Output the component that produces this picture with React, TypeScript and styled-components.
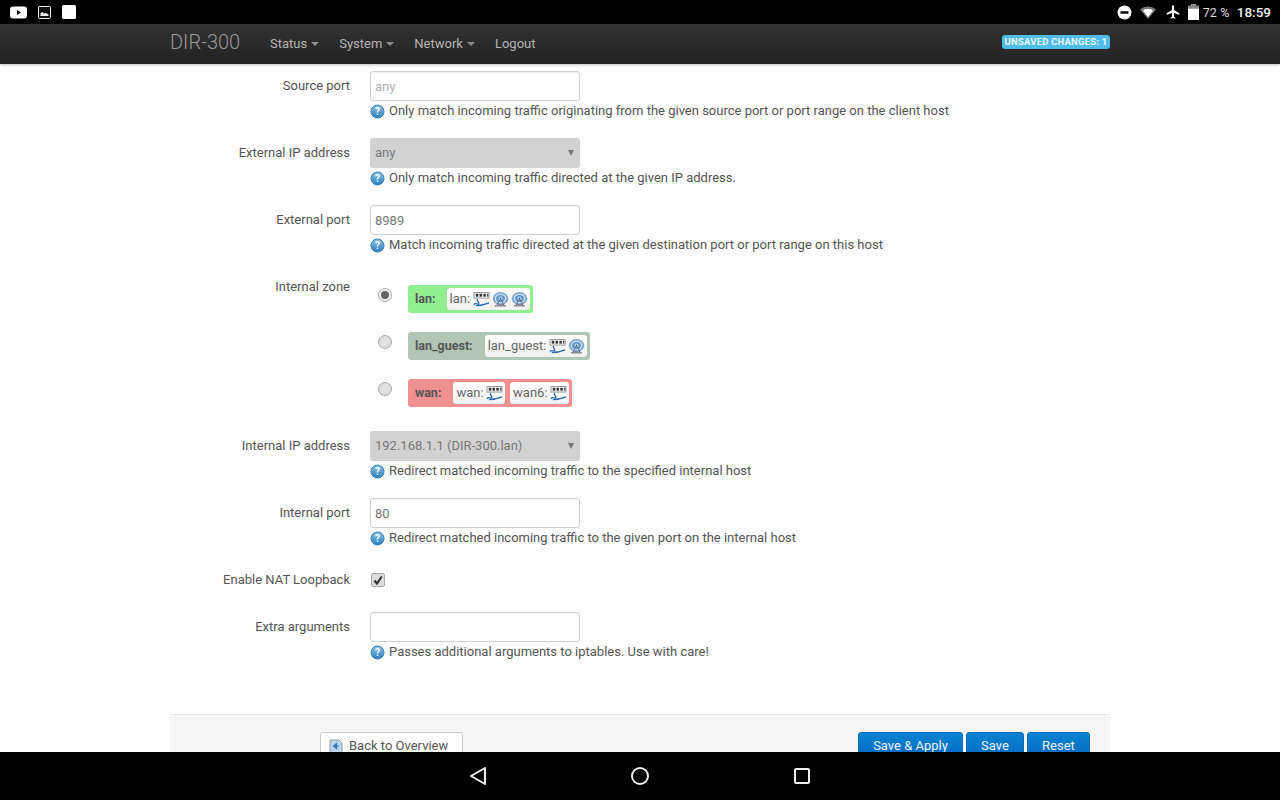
import React from "react";
import styled, { createGlobalStyle } from "styled-components";

const Global = createGlobalStyle`
  html, body { margin: 0; padding: 0; background: #000; }
  body { font-family: Roboto, "Liberation Sans", sans-serif; font-size: 13px; color: #555; overflow: hidden; }
  * { box-sizing: border-box; }
`;

const Screen = styled.div`
  width: 1280px; height: 800px; display: flex; flex-direction: column; overflow: hidden; background: #fff;
`;
const StatusBar = styled.div`
  height: 24px; flex: none; background: #000; display: flex; align-items: center; justify-content: space-between; padding: 0 9px 0 10px; color: #fff;
`;
const LeftIcons = styled.div`
  display: flex; align-items: center; gap: 11px;
`;
const RightIcons = styled.div`
  display: flex; align-items: center;
`;
const StatusSlot = styled.span`
  display: flex; margin-right: ${p => p.$after}px;
`;
const BatteryText = styled.span`
  font-size: 12.5px; color: #ddd; width: 34px; letter-spacing: .1px; white-space: nowrap;
`;
const Clock = styled.span`
  font-size: 13.5px; font-weight: 500; color: #f2f2f2;
`;
const NavBar = styled.header`
  height: 40px; flex: none; background: linear-gradient(#333333, #222222); box-shadow: 0 1px 3px rgba(0,0,0,.25); position: relative; z-index: 1;
`;
const NavInner = styled.div`
  width: 940px; height: 100%; margin: 0 auto; display: flex; align-items: center; padding-bottom: 2px;
`;
const Brand = styled.a`
  font-size: 20px; font-weight: 300; color: #999; width: 100px; margin-top: -3px;
`;
const NavItem = styled.a`
  display: flex; align-items: center; font-size: 13px; color: #b4b4b4; margin-right: 20px;
`;
const Caret = styled.i`
  width: 0; height: 0; margin: 1px 0 0 4px; border-top: 4px solid #8c8c8c; border-left: 4px solid transparent; border-right: 4px solid transparent;
`;
const Badge = styled.span`
  margin-left: auto; margin-top: -3px; height: 14px; width: 108px; border-radius: 3px; background: #4fbde9; color: #e9f6fb; font-size: 9.5px; font-weight: 700; line-height: 14px; text-align: center; white-space: nowrap; letter-spacing: .2px;
`;
const Main = styled.main`
  flex: 1; min-height: 0; overflow: hidden; background: #fff; padding-top: 7px;
`;
const Container = styled.div`
  width: 940px; margin: 0 auto;
`;
const FormList = styled.div`
  display: flex; flex-direction: column; gap: 17px; padding-bottom: 52px;
`;
const Row = styled.div`
  display: grid; grid-template-columns: 180px 1fr; column-gap: 20px;
`;
const Label = styled.label`
  text-align: right; line-height: 29px; color: #555; font-size: 13px;
`;
const Field = styled.div`
  display: flex; flex-direction: column; align-items: flex-start; min-height: 30px;
`;
const TextInput = styled.div`
  width: 210px; height: 30px; border: 1px solid #d0d0d0; border-radius: 3px; background: #fff; padding: 0 4px; line-height: 30px; font-size: 13px; color: ${p => (p.$placeholder ? "#b3b3b3" : "#777")}; box-shadow: inset 0 1px 1px rgba(0,0,0,.05);
`;
const SelectBox = styled.div`
  position: relative; width: 210px; height: 30px; border-radius: 3px; background: #d2d2d2; padding: 0 5px; line-height: 30px; font-size: 13px; color: #777;
  &::after { content: ""; position: absolute; right: 6px; top: 12px; border-top: 6px solid #777; border-left: 3px solid transparent; border-right: 3px solid transparent; }
`;
const Help = styled.div`
  display: flex; align-items: center; gap: 4px; height: 20px; font-size: 13px; color: #555; white-space: nowrap; line-height: 20px;
`;
const ZoneList = styled.div`
  display: flex; flex-direction: column; gap: 19px; padding: 13px 0 7px 8px;
`;
const ZoneRow = styled.div`
  display: flex; gap: 16px;
`;
const Radio = styled.span`
  width: 14px; height: 14px; margin-top: 3px; border-radius: 50%; border: 1px solid #aaa; background: radial-gradient(#e6e6e6, #d8d8d8); display: flex; align-items: center; justify-content: center;
  ${p => p.$checked && `background:#f2f2f2; &::after{content:"";width:8px;height:8px;border-radius:50%;background:#666;}`}
`;
const Zone = styled.div`
  height: 28px; display: flex; align-items: center; gap: ${p => p.$gap}px; padding: 3px; border-radius: 3px; background: ${p => p.$bg};
`;
const ZoneName = styled.strong`
  font-size: 12.5px; font-weight: 700; color: #555; padding: 0 ${p => p.$pad}px 2px 4px; white-space: nowrap;
`;
const Device = styled.span`
  height: 22px; display: flex; align-items: center; gap: 2.5px; padding: 0 2px 2px 3px; background: linear-gradient(#fff, #f0f0f0); border-radius: 3px; font-size: 13px; color: #666; white-space: nowrap; box-shadow: 0 0 1px rgba(0,0,0,.15);
`;
const CheckBox = styled.span`
  width: 14px; height: 14px; margin: 8px 0 0 1px; border: 1px solid #aaa; border-radius: 2px; background: #dcdcdc; display: flex; align-items: center; justify-content: center;
`;
const Footer = styled.footer`
  height: 60px; border-top: 1px solid #e5e5e5; background: #f5f5f5; display: flex; padding: 17px 20px 0 150px; align-items: flex-start;
`;
const BackButton = styled.a`
  height: 30px; width: 143px; flex: none; display: flex; align-items: flex-start; gap: 6px; padding: 5px 0 0 8px; border: 1px solid #ccc; border-radius: 3px; background: #fff; color: #555; font-size: 13px; line-height: 16px;
`;
const Actions = styled.div`
  margin-left: auto; display: flex; gap: 3px;
`;
const ActionButton = styled.a`
  height: 30px; width: ${p => p.$w}px; border: 1px solid #0a6db5; border-radius: 3px; background: linear-gradient(#0a83d1, #0665c0); color: #eaf4fb; font-size: 13px; line-height: 25px; text-align: center;
`;
const SystemNav = styled.nav`
  height: 48px; flex: none; background: #000; display: grid; grid-template-columns: repeat(3, 162px); justify-content: center; align-items: center; justify-items: center; position: relative; z-index: 2;
`;

const HelpIcon = () => (
  <svg width="15" height="15" viewBox="0 0 15 15">
    <defs>
      <linearGradient id="hg" x1="0" y1="0" x2="0" y2="1">
        <stop offset="0" stopColor="#8cc4e8" />
        <stop offset="1" stopColor="#2a7fc0" />
      </linearGradient>
    </defs>
    <circle cx="7.5" cy="7.5" r="6.5" fill="url(#hg)" stroke="#3b7fb4" />
    <text x="7.5" y="11" textAnchor="middle" fontSize="10" fontWeight="700" fontFamily="Roboto, sans-serif" fill="#fff">?</text>
  </svg>
);
const NetIcon = () => (
  <svg width="17" height="16" viewBox="0 0 18 16" style={{ marginTop: 2 }}>
    <rect x="1" y="1" width="16" height="6" fill="#eee" stroke="#888" strokeWidth=".8" />
    <rect x="3" y="2.5" width="2.5" height="3" fill="#333" />
    <rect x="7" y="2.5" width="2.5" height="3" fill="#333" />
    <rect x="11" y="2.5" width="2.5" height="3" fill="#333" />
    <rect x="15" y="2.5" width="1.2" height="3" fill="#333" />
    <path d="M1 14c2-3 4 1 5-1s-3-3-1-5M3 15c5 0 9-1 14-3" stroke="#2a6fb5" strokeWidth="1.4" fill="none" />
  </svg>
);
const WifiIcon = () => (
  <svg width="17" height="15" viewBox="0 0 17 15" style={{ marginTop: 2, marginLeft: -0.5 }}>
    <ellipse cx="8.5" cy="6.5" rx="7.8" ry="6.5" fill="#7fa9da" />
    <ellipse cx="8.5" cy="6.5" rx="5.8" ry="4.8" fill="#cfe0f3" />
    <ellipse cx="8.5" cy="6.5" rx="4.4" ry="3.6" fill="#5f93cf" />
    <circle cx="8.5" cy="6.5" r="2" fill="#cfe0f3" />
    <circle cx="8.5" cy="6.5" r="1" fill="#3f6fa8" />
    <path d="M8.5 7L5 13h7z" fill="none" stroke="#556" strokeWidth=".8" />
    <rect x="3" y="13" width="11" height="1.5" fill="#888" />
  </svg>
);

const HelpLine = ({ children }: { children: React.ReactNode }) => (
  <Help><HelpIcon />{children}</Help>
);

const FormRow = ({ label, children }: { label: string; children: React.ReactNode }) => (
  <Row><Label>{label}</Label><Field>{children}</Field></Row>
);

export default function App() {
  return (
    <Screen>
      <Global />
      <StatusBar>
        <LeftIcons>
          <svg width="17" height="13" viewBox="0 0 17 13"><rect width="17" height="12" y=".5" rx="3" fill="#fff" /><path d="M7 4l4 2.5L7 9z" fill="#000" /></svg>
          <svg width="13" height="13" viewBox="0 0 13 13"><rect x=".5" y=".5" width="12" height="12" rx="1" fill="#111" stroke="#eee" /><path d="M2.5 10V7.5l2-1.5 1.5 1.500 2-.5 2.5 1.500V10z" fill="#eee" /></svg>
          <svg width="14" height="14" viewBox="0 0 14 14"><rect width="14" height="14" rx="1.5" fill="#fff" /></svg>
        </LeftIcons>
        <RightIcons>
          <StatusSlot $after={8}><svg width="15" height="15" viewBox="0 0 15 15"><circle cx="7.5" cy="7.5" r="7" fill="#fff" /><rect x="3.5" y="6.3" width="8" height="2.4" fill="#000" /></svg></StatusSlot>
          <StatusSlot $after={9}><svg width="16" height="13" viewBox="0 0 16 13"><path d="M0 3.5C4.5-.6 11.5-.6 16 3.5L8 13z" fill="#777" /><path d="M3 4.8l2-1.800h6l2 1.800L8 11z" fill="#fff" /></svg></StatusSlot>
          <StatusSlot $after={7}><svg width="16" height="16" viewBox="0 0 24 24"><path d="M21 16v-2l-8-5V3.5A1.5 1.5 0 0 0 11.5 2 1.5 1.5 0 0 0 10 3.5V9l-8 5v2l8-2.500V19l-2 1.500V22l3.500-1 3.500 1v-1.500L13 19v-5.500z" fill="#fff" transform="translate(.5 0)" /></svg></StatusSlot>
          <StatusSlot $after={4}><svg width="11" height="16" viewBox="0 0 11 16"><rect x="3" width="5" height="2" fill="#888" /><rect y="1.5" width="11" height="3" fill="#888" /><rect y="4.5" width="11" height="11.5" fill="#fff" /></svg></StatusSlot>
          <BatteryText>72 %</BatteryText>
          <Clock>18:59</Clock>
        </RightIcons>
      </StatusBar>
      <NavBar>
        <NavInner>
          <Brand>DIR-300</Brand>
          <NavItem>Status<Caret /></NavItem>
          <NavItem>System<Caret /></NavItem>
          <NavItem>Network<Caret /></NavItem>
          <NavItem>Logout</NavItem>
          <Badge>UNSAVED CHANGES: 1</Badge>
        </NavInner>
      </NavBar>
      <Main>
        <Container>
          <FormList>
            <FormRow label="Source port">
              <TextInput $placeholder>any</TextInput>
              <HelpLine>Only match incoming traffic originating from the given source port or port range on the client host</HelpLine>
            </FormRow>
            <FormRow label="External IP address">
              <SelectBox>any</SelectBox>
              <HelpLine>Only match incoming traffic directed at the given IP address.</HelpLine>
            </FormRow>
            <FormRow label="External port">
              <TextInput>8989</TextInput>
              <HelpLine>Match incoming traffic directed at the given destination port or port range on this host</HelpLine>
            </FormRow>
            <FormRow label="Internal zone">
              <ZoneList>
                <ZoneRow>
                  <Radio $checked />
                  <Zone $bg="#90f090" $gap={3}>
                    <ZoneName $pad={8}>lan:</ZoneName>
                    <Device>lan:<NetIcon /><WifiIcon /><WifiIcon /></Device>
                  </Zone>
                </ZoneRow>
                <ZoneRow>
                  <Radio />
                  <Zone $bg="#b1c6b5" $gap={3}>
                    <ZoneName $pad={9}>lan_guest:</ZoneName>
                    <Device>lan_guest:<NetIcon /><WifiIcon /></Device>
                  </Zone>
                </ZoneRow>
                <ZoneRow>
                  <Radio />
                  <Zone $bg="#f09090" $gap={5}>
                    <ZoneName $pad={7}>wan:</ZoneName>
                    <Device>wan:<NetIcon /></Device>
                    <Device>wan6:<NetIcon /></Device>
                  </Zone>
                </ZoneRow>
              </ZoneList>
            </FormRow>
            <FormRow label="Internal IP address">
              <SelectBox>192.168.1.1 (DIR-300.lan)</SelectBox>
              <HelpLine>Redirect matched incoming traffic to the specified internal host</HelpLine>
            </FormRow>
            <FormRow label="Internal port">
              <TextInput>80</TextInput>
              <HelpLine>Redirect matched incoming traffic to the given port on the internal host</HelpLine>
            </FormRow>
            <FormRow label="Enable NAT Loopback">
              <CheckBox>
                <svg width="10" height="10" viewBox="0 0 10 10"><path d="M1.5 5.5L4 8.5 8.8 1.5" stroke="#333" strokeWidth="2.2" fill="none" /></svg>
              </CheckBox>
            </FormRow>
            <FormRow label="Extra arguments">
              <TextInput />
              <HelpLine>Passes additional arguments to iptables. Use with care!</HelpLine>
            </FormRow>
          </FormList>
          <Footer>
            <BackButton>
              <svg width="14" height="16" viewBox="0 0 14 16" style={{ marginTop: 1 }}><path d="M1 1h9l3 3v11H1z" fill="#b8d6f2" stroke="#9a9a9a" /><path d="M10 7H5.5M7.5 4.5L4.5 7l3 2.5z" stroke="#3878b8" strokeWidth="1.2" fill="#3878b8" /></svg>
              Back to Overview
            </BackButton>
            <Actions>
              <ActionButton $w={105}>Save &amp; Apply</ActionButton>
              <ActionButton $w={58}>Save</ActionButton>
              <ActionButton $w={63}>Reset</ActionButton>
            </Actions>
          </Footer>
        </Container>
      </Main>
      <SystemNav>
        <svg width="18" height="20" viewBox="0 0 18 20"><path d="M16 2L2 10l14 8z" fill="none" stroke="#eee" strokeWidth="2" strokeLinejoin="round" /></svg>
        <svg width="20" height="20" viewBox="0 0 20 20"><circle cx="10" cy="10" r="8" fill="none" stroke="#eee" strokeWidth="2" /></svg>
        <svg width="18" height="18" viewBox="0 0 18 18"><rect x="2" y="2" width="14" height="14" rx="1" fill="none" stroke="#eee" strokeWidth="2" /></svg>
      </SystemNav>
    </Screen>
  );
}
